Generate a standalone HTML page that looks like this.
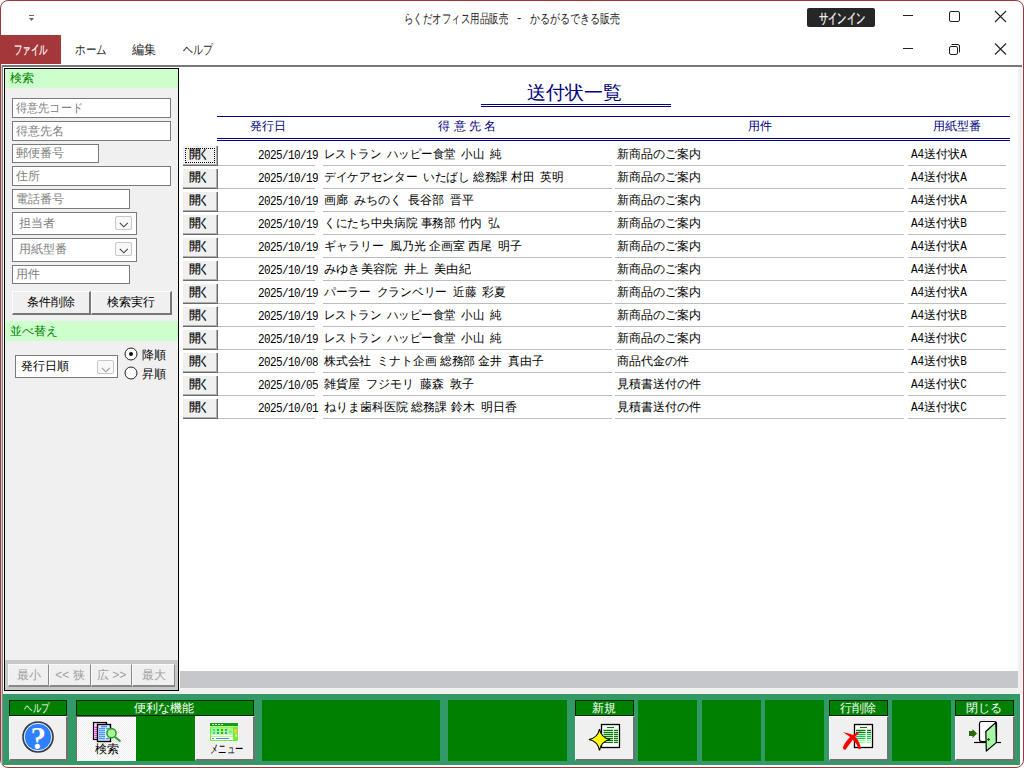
<!DOCTYPE html>
<html><head><meta charset="utf-8"><title>送付状一覧</title>
<style>
*{margin:0;padding:0;box-sizing:border-box}
html,body{width:1024px;height:768px;overflow:hidden;background:#fff}
body{position:relative;font-family:"Liberation Sans",sans-serif;font-size:12px;color:#000}
div{position:absolute;white-space:nowrap}
.s{display:inline-block;transform-origin:0 50%}
.win{left:0;top:0;width:1024px;height:768px;border:1px solid #a4373a;border-radius:8px;background:#fff}
.title{left:404px;top:10px;width:220px;font-size:13px;color:#222;white-space:nowrap}
.qat{left:29px;top:14px;width:6px;height:7px}
.signin{left:807px;top:8px;width:68px;height:19px;background:#262626;border-radius:2px;color:#fff;font-size:14px;text-align:center;line-height:21px;padding-right:1px;-webkit-text-stroke:0.3px #fff}
.tab{left:1px;top:35px;width:60px;height:29px;background:#a4373a;color:#fff;font-size:13px;line-height:29px;padding-left:13px;-webkit-text-stroke:0.2px #fff}
.menu{top:35px;height:29px;line-height:29px;font-size:13px;color:#262626}
/* form frame */
.frame{left:1px;top:64px;width:1022px;height:703px;background:#fff}
.ftop{left:1px;top:65px;width:1021px;height:2px;background:#777}
.fleft{left:1px;top:65px;width:2px;height:700px;background:#888;border-left:1px solid #c8c8c8}
.fright{left:1018px;top:67px;width:4px;height:627px;background:#f0f0f0}
/* left panel */
.lp{left:4px;top:68px;width:175px;height:623px;border:1px solid #000;background:#f0f0f0}
.gh{left:5px;width:173px;height:19px;background:#ccffcc;color:#008000;font-size:12px;padding-left:5px;line-height:19px}
.tb{left:12px;height:19px;border:1px solid #7a7a7a;background:#fff;color:#808080;font-size:12px;line-height:17px;padding-left:3px;white-space:nowrap}
.cb{left:12px;height:23px;border:1px solid #7a7a7a;background:#fff;color:#808080;font-size:12px;line-height:21px;padding-left:6px;white-space:nowrap}
.dd{width:17px;height:14px;border:1px solid #c8c8c8;border-radius:2px;background:#f8f8f8}
.pbtn{top:291px;height:24px;background:#f0f0f0;border-right:2px solid #777;border-bottom:2px solid #777;border-left:1px solid #fff;border-top:1px solid #fff;text-align:center;line-height:21px;font-size:12px;color:#000}
.lfoot{left:5px;top:660px;width:173px;height:30px;background:#c8c8c8}
.nbtn{top:664px;height:23px;background:#f0f0f0;border-right:1px solid #888;border-bottom:2px solid #888;border-top:1px solid #fafafa;border-left:1px solid #fafafa;color:#a0a0a0;text-align:center;line-height:20px;font-size:12px}
/* main */
.hscroll{left:180px;top:671px;width:838px;height:17px;background:#c6c7cb}
.below{left:3px;top:688px;width:1019px;height:6px;background:#f0f0f0}
.navy{background:#000080}
.ttl{left:527px;top:80px;font-size:18.6px;color:#000080;white-space:nowrap}
.hd{top:118px;color:#000080;font-size:12px;white-space:nowrap;text-align:center}
.btn.open{left:183px;width:35px;height:20px;background:#f0f0f0;border-right:1px solid #6a6a6a;border-bottom:1px solid #6a6a6a;box-shadow:inset -1px -1px 0 #b0b0b0;font-size:12px;line-height:17px;padding-left:6px;-webkit-text-stroke:0.2px #000}
.fr{left:2px;top:2px;width:30px;height:15px;border:1px dotted #000}
.cell{height:20px;border-bottom:1px solid #bdbdbd;font-size:12px;line-height:17px;white-space:nowrap;color:#000}
.date{left:218px;width:97px;font-family:"Liberation Mono",monospace;font-size:11px;letter-spacing:-0.6px}
.date .s{position:absolute;right:-3px;top:1.5px;transform:scaleY(1.18);transform-origin:100% 60%}
.date{overflow:visible}
.name{left:323px;width:289px;padding-left:1px}
.yo{left:615px;width:289px;padding-left:2px}
.kata{left:908px;width:98px;padding-left:3px}
/* bottom bar */
.gbar{left:3px;top:694px;width:1017px;height:71px;background:#339966}
.dp{top:700px;height:61px;background:#008000}
.bh{top:700px;height:16px;background:#008000;border:1px solid #002800;color:#fff;font-size:12px;text-align:center;line-height:14px;padding-right:2px}
.bb{top:716px;height:45px;background:#f0f0f0;border-right:2px solid #707070;border-bottom:2px solid #707070;border-top:1px solid #fff;border-left:1px solid #fff}
.bb.press{border-top:1px solid #707070;border-left:1px solid #707070;border-right:none;border-bottom:none;background:repeating-conic-gradient(#fff 0 25%,#ececec 0 50%) 0 0/2px 2px}
.cell,.tb,.cb,.pbtn,.btn,.gh,.hd,.bh{-webkit-text-stroke:0}
.cell.date{-webkit-text-stroke:0}
.m{font-family:"Liberation Mono",monospace;font-size:11px;display:inline-block;transform:scaleY(1.15)}

</style></head><body>
<div class="win"></div>
<!-- title bar -->
<svg style="position:absolute;left:28px;top:14px" width="8" height="9" viewBox="0 0 8 9"><rect x="1" y="1" width="5" height="1" fill="#666"/><path d="M1 4 L6 4 L3.5 7 Z" fill="#666"/></svg>
<div class="title" style="left:404px"><span class="s" style="transform:scaleX(0.727)">らくだオフィス用品販売</span></div>
<div class="title" style="left:517px">-</div>
<div class="title" style="left:530px"><span class="s" style="transform:scaleX(0.77)">かるがるできる販売</span></div>
<div class="signin"><span class="s" style="transform:scaleX(0.66);transform-origin:50% 50%">サインイン</span></div>
<svg style="position:absolute;left:890px;top:0" width="134" height="64" viewBox="0 0 134 64">
 <g stroke="#222" stroke-width="1" fill="none" shape-rendering="crispEdges">
  <line x1="13" y1="15.5" x2="23" y2="15.5"/>
  <rect x="59.5" y="11.5" width="10" height="10" rx="1.5" shape-rendering="auto"/>
  <line x1="13" y1="48.5" x2="23" y2="48.5"/>
  <rect x="59.5" y="46.5" width="8" height="8" rx="1.5" shape-rendering="auto"/>
  <path d="M61.5 44.5 H68 a1.5 1.5 0 0 1 1.5 1.5 V52.5" shape-rendering="auto"/>
 </g>
 <g stroke="#222" stroke-width="1.1" fill="none">
  <path d="M105 11 L116 22 M116 11 L105 22"/>
  <path d="M105 43.5 L116 54.5 M116 43.5 L105 54.5"/>
 </g>
</svg>
<!-- menu -->
<div class="tab"><span class="s" style="transform:scaleX(0.65)">ファイル</span></div>
<div class="menu" style="left:75px"><span class="s" style="transform:scaleX(0.81)">ホーム</span></div>
<div class="menu" style="left:132px"><span class="s" style="transform:scaleX(0.93)">編集</span></div>
<div class="menu" style="left:183px"><span class="s" style="transform:scaleX(0.77)">ヘルプ</span></div>
<!-- frame -->
<div class="ftop"></div>
<div class="fleft"></div>
<div class="fright"></div>
<div class="below"></div>
<!-- left panel -->
<div class="lp"></div>
<div class="gh" style="top:69px">検索</div>
<div class="tb" style="top:98px;width:159px;height:20px;line-height:18px"><span class="s" style="transform:scaleX(0.93)">得意先コード</span></div>
<div class="tb" style="top:121px;width:159px;height:20px;line-height:18px">得意先名</div>
<div class="tb" style="top:144px;width:87px">郵便番号</div>
<div class="tb" style="top:166px;width:159px;height:20px;line-height:18px">住所</div>
<div class="tb" style="top:189px;width:118px;height:20px;line-height:18px">電話番号</div>
<div class="cb" style="top:212px;width:125px">担当者<div class="dd" style="left:102px;top:3px"><svg style="position:absolute;left:3px;top:5px" width="10" height="6" viewBox="0 0 10 6"><path d="M0.8 0.8 L4.8 4.8 L8.8 0.8" stroke="#444" stroke-width="1.1" fill="none"/></svg></div></div>
<div class="cb" style="top:238px;width:125px;height:24px;line-height:20px">用紙型番<div class="dd" style="left:102px;top:3px"><svg style="position:absolute;left:3px;top:5px" width="10" height="6" viewBox="0 0 10 6"><path d="M0.8 0.8 L4.8 4.8 L8.8 0.8" stroke="#444" stroke-width="1.1" fill="none"/></svg></div></div>
<div class="tb" style="top:265px;width:118px">用件</div>
<div class="pbtn" style="left:12px;width:79px">条件削除</div>
<div class="pbtn" style="left:91px;width:81px">検索実行</div>
<div class="gh" style="top:321px;height:20px;line-height:20px">並べ替え</div>
<div class="cb" style="left:15px;top:355px;width:103px;color:#000;padding-left:5px">発行日順<div class="dd" style="left:81px;top:4px"><svg style="position:absolute;left:3px;top:6px" width="10" height="6" viewBox="0 0 10 6"><path d="M0.8 0.8 L4.8 4.8 L8.8 0.8" stroke="#999" stroke-width="1.1" fill="none"/></svg></div></div>
<svg style="position:absolute;left:124px;top:347px" width="14" height="33" viewBox="0 0 14 33">
 <circle cx="7" cy="7" r="6" fill="#fff" stroke="#222" stroke-width="1"/>
 <circle cx="7" cy="7" r="2" fill="#111"/>
 <circle cx="7" cy="26" r="6" fill="#fff" stroke="#222" stroke-width="1"/>
</svg>
<div style="left:142px;top:347px;font-size:12px">降順</div>
<div style="left:142px;top:366px;font-size:12px">昇順</div>
<div class="lfoot"></div>
<div class="nbtn" style="left:8px;width:41px">最小</div>
<div class="nbtn" style="left:49px;width:42px">&lt;&lt; 狭</div>
<div class="nbtn" style="left:91px;width:41px">広 &gt;&gt;</div>
<div class="nbtn" style="left:132px;width:43px">最大</div>
<!-- main -->
<div class="hscroll"></div>
<div class="ttl">送付状一覧</div>
<div class="navy" style="left:481px;top:104px;width:190px;height:1px"></div>
<div class="navy" style="left:481px;top:106px;width:190px;height:1px"></div>
<div class="navy" style="left:217px;top:116px;width:793px;height:1px"></div>
<div class="navy" style="left:217px;top:138px;width:793px;height:1px"></div>
<div class="navy" style="left:217px;top:140px;width:793px;height:1px"></div>
<div class="hd" style="left:219px;width:97px">発行日</div>
<div class="hd" style="left:323px;width:289px">得 意 先 名</div>
<div class="hd" style="left:615px;width:289px">用件</div>
<div class="hd" style="left:908px;width:98px">用紙型番</div>
<div class="btn open" style="top:146px"><div class="fr"></div><span style="letter-spacing:-3px">開</span>く</div>
<div class="cell date" style="top:146px"><span class="s">2025/10/19</span></div>
<div class="cell name" style="top:146px"><span class="s" style="transform:scaleX(0.954)">レストラン ハッピー食堂 小山 純</span></div>
<div class="cell yo" style="top:146px">新商品のご案内</div>
<div class="cell kata" style="top:146px"><span class="m">A4</span>送付状<span class="m">A</span></div>
<div class="btn open" style="top:169px"><span style="letter-spacing:-3px">開</span>く</div>
<div class="cell date" style="top:169px"><span class="s">2025/10/19</span></div>
<div class="cell name" style="top:169px"><span class="s" style="transform:scaleX(0.971)">デイケアセンター いたばし 総務課 村田 英明</span></div>
<div class="cell yo" style="top:169px">新商品のご案内</div>
<div class="cell kata" style="top:169px"><span class="m">A4</span>送付状<span class="m">A</span></div>
<div class="btn open" style="top:192px"><span style="letter-spacing:-3px">開</span>く</div>
<div class="cell date" style="top:192px"><span class="s">2025/10/19</span></div>
<div class="cell name" style="top:192px"><span class="s" style="transform:scaleX(1.0)">画廊 みちのく 長谷部 晋平</span></div>
<div class="cell yo" style="top:192px">新商品のご案内</div>
<div class="cell kata" style="top:192px"><span class="m">A4</span>送付状<span class="m">A</span></div>
<div class="btn open" style="top:215px"><span style="letter-spacing:-3px">開</span>く</div>
<div class="cell date" style="top:215px"><span class="s">2025/10/19</span></div>
<div class="cell name" style="top:215px"><span class="s" style="transform:scaleX(0.972)">くにたち中央病院 事務部 竹内 弘</span></div>
<div class="cell yo" style="top:215px">新商品のご案内</div>
<div class="cell kata" style="top:215px"><span class="m">A4</span>送付状<span class="m">B</span></div>
<div class="btn open" style="top:238px"><span style="letter-spacing:-3px">開</span>く</div>
<div class="cell date" style="top:238px"><span class="s">2025/10/19</span></div>
<div class="cell name" style="top:238px"><span class="s" style="transform:scaleX(0.995)">ギャラリー 風乃光 企画室 西尾 明子</span></div>
<div class="cell yo" style="top:238px">新商品のご案内</div>
<div class="cell kata" style="top:238px"><span class="m">A4</span>送付状<span class="m">A</span></div>
<div class="btn open" style="top:261px"><span style="letter-spacing:-3px">開</span>く</div>
<div class="cell date" style="top:261px"><span class="s">2025/10/19</span></div>
<div class="cell name" style="top:261px"><span class="s" style="transform:scaleX(1.02)">みゆき美容院 井上 美由紀</span></div>
<div class="cell yo" style="top:261px">新商品のご案内</div>
<div class="cell kata" style="top:261px"><span class="m">A4</span>送付状<span class="m">A</span></div>
<div class="btn open" style="top:284px"><span style="letter-spacing:-3px">開</span>く</div>
<div class="cell date" style="top:284px"><span class="s">2025/10/19</span></div>
<div class="cell name" style="top:284px"><span class="s" style="transform:scaleX(0.976)">パーラー クランベリー 近藤 彩夏</span></div>
<div class="cell yo" style="top:284px">新商品のご案内</div>
<div class="cell kata" style="top:284px"><span class="m">A4</span>送付状<span class="m">A</span></div>
<div class="btn open" style="top:307px"><span style="letter-spacing:-3px">開</span>く</div>
<div class="cell date" style="top:307px"><span class="s">2025/10/19</span></div>
<div class="cell name" style="top:307px"><span class="s" style="transform:scaleX(0.954)">レストラン ハッピー食堂 小山 純</span></div>
<div class="cell yo" style="top:307px">新商品のご案内</div>
<div class="cell kata" style="top:307px"><span class="m">A4</span>送付状<span class="m">B</span></div>
<div class="btn open" style="top:330px"><span style="letter-spacing:-3px">開</span>く</div>
<div class="cell date" style="top:330px"><span class="s">2025/10/19</span></div>
<div class="cell name" style="top:330px"><span class="s" style="transform:scaleX(0.954)">レストラン ハッピー食堂 小山 純</span></div>
<div class="cell yo" style="top:330px">新商品のご案内</div>
<div class="cell kata" style="top:330px"><span class="m">A4</span>送付状<span class="m">C</span></div>
<div class="btn open" style="top:353px"><span style="letter-spacing:-3px">開</span>く</div>
<div class="cell date" style="top:353px"><span class="s">2025/10/08</span></div>
<div class="cell name" style="top:353px"><span class="s" style="transform:scaleX(0.986)">株式会社 ミナト企画 総務部 金井 真由子</span></div>
<div class="cell yo" style="top:353px">商品代金の件</div>
<div class="cell kata" style="top:353px"><span class="m">A4</span>送付状<span class="m">B</span></div>
<div class="btn open" style="top:376px"><span style="letter-spacing:-3px">開</span>く</div>
<div class="cell date" style="top:376px"><span class="s">2025/10/05</span></div>
<div class="cell name" style="top:376px"><span class="s" style="transform:scaleX(1.0)">雑貨屋 フジモリ 藤森 敦子</span></div>
<div class="cell yo" style="top:376px">見積書送付の件</div>
<div class="cell kata" style="top:376px"><span class="m">A4</span>送付状<span class="m">C</span></div>
<div class="btn open" style="top:399px"><span style="letter-spacing:-3px">開</span>く</div>
<div class="cell date" style="top:399px"><span class="s">2025/10/01</span></div>
<div class="cell name" style="top:399px"><span class="s" style="transform:scaleX(1.0)">ねりま歯科医院 総務課 鈴木 明日香</span></div>
<div class="cell yo" style="top:399px">見積書送付の件</div>
<div class="cell kata" style="top:399px"><span class="m">A4</span>送付状<span class="m">C</span></div>
<!-- bottom bar -->
<div class="gbar"></div>
<div class="bh" style="left:9px;width:58px"><span class="s" style="transform:scaleX(0.7);transform-origin:50% 50%">ヘルプ</span></div>
<div class="bb" style="left:9px;width:59px"></div>
<div class="bh" style="left:76px;width:178px">便利な機能</div>
<div class="dp" style="left:136px;top:716px;width:59px;height:45px"></div>
<div class="bb press" style="left:76px;width:60px"></div>
<div class="bb" style="left:195px;width:60px"></div>
<div class="dp" style="left:262px;width:178px"></div>
<div class="dp" style="left:448px;width:119px"></div>
<div class="bh" style="left:575px;width:59px">新規</div>
<div class="bb" style="left:575px;width:60px"></div>
<div class="dp" style="left:638px;width:59px"></div>
<div class="dp" style="left:702px;width:59px"></div>
<div class="dp" style="left:765px;width:59px"></div>
<div class="bh" style="left:829px;width:59px">行削除</div>
<div class="bb" style="left:829px;width:60px"></div>
<div class="dp" style="left:892px;width:59px"></div>
<div class="bh" style="left:955px;width:59px">閉じる</div>
<div class="bb" style="left:955px;width:60px"></div>
<svg style="position:absolute;left:0;top:0" width="1024" height="768" viewBox="0 0 1024 768">
 <!-- help -->
 <circle cx="38" cy="737" r="15" fill="#2f80ff" stroke="#3a3a3a" stroke-width="1.6"/>
 <circle cx="38" cy="737" r="13.7" fill="none" stroke="#fff" stroke-width="0.9"/>
 <text x="38.2" y="748.5" font-family="Liberation Serif" font-weight="bold" font-size="31" fill="#fff" text-anchor="middle">?</text>
 <!-- search -->
 <rect x="93.5" y="722.5" width="13" height="17" fill="#ffd0ff" stroke="#000" stroke-width="1.2"/>
 <g stroke="#ff20ff" stroke-width="1">
  <path d="M94.5 727.5h2.5M94.5 729.5h2.5M94.5 731.5h2.5M94.5 733.5h2.5M94.5 735.5h2.5M94.5 737.5h2.5"/>
 </g>
 <rect x="97.5" y="724.5" width="13" height="17" fill="#dce8ff" stroke="#000" stroke-width="1.4"/>
 <g stroke="#1a7fff" stroke-width="1.1">
  <path d="M101 726.7h6M99 728.7h6M99 730.7h6M99 732.7h6M99 734.7h6M99 736.7h6M99 738.7h6M106 728.7h3M106 738.7h3"/>
 </g>
 <line x1="115" y1="737" x2="120.5" y2="741.5" stroke="#30a030" stroke-width="2.2"/>
 <circle cx="111.5" cy="733.2" r="4.6" fill="#a8f8a0" stroke="#28a028" stroke-width="1.6"/>
 <!-- menu -->
 <rect x="209.5" y="722.5" width="29" height="19" fill="#fff"/>
 <rect x="210" y="723" width="28" height="3" fill="#10a010"/>
 <path d="M212 724.5h2M215 724.5h2M218 724.5h2M221 724.5h2" stroke="#d0ffd0" stroke-width="1"/>
 <rect x="210" y="726.5" width="28" height="14.5" fill="#70f030"/>
 <rect x="211" y="727.5" width="22" height="7" fill="#a8ff70"/>
 <rect x="213" y="729" width="2" height="2" fill="#20d0ff"/><rect x="217" y="729" width="2" height="2" fill="#10b0b0"/><rect x="221" y="729" width="2" height="2" fill="#40a020"/><rect x="225" y="729" width="2" height="2" fill="#4a88ff"/>
 <rect x="213" y="732" width="2" height="2" fill="#20d0ff"/><rect x="217" y="732" width="2" height="2" fill="#10b0b0"/><rect x="221" y="732" width="2" height="2" fill="#40a020"/><rect x="225" y="732" width="2" height="2" fill="#4a88ff"/>
 <rect x="229" y="731" width="2.5" height="2" fill="#40f0ff"/>
 <rect x="234" y="729" width="3" height="4" fill="#ffc840"/>
 <rect x="211" y="734.5" width="22" height="2" fill="#fff"/>
 <rect x="235" y="734.5" width="2" height="2" fill="#fff"/>
 <rect x="211" y="737" width="22" height="3" fill="#fff"/>
 <path d="M212 738.5h2M216 738.5h13" stroke="#4a88ff" stroke-width="1"/>
 <!-- new -->
 <rect x="601.5" y="724.5" width="18" height="23" fill="#fff" stroke="#000" stroke-width="1.3"/>
 <g stroke="#008000" stroke-width="1.2">
  <path d="M607 727.5h7M603.5 730.3h9.5M614 730.3h4M603.5 732.3h9.5M614 732.3h4M603.5 734.3h9.5M614 734.3h4M603.5 736.3h9.5M614 736.3h4M603.5 738.3h9.5M614 738.3h4M603.5 740.3h9.5M614 740.3h4M603.5 742.3h9.5M614 742.3h4"/>
 </g>
 <path d="M599.5 729 Q601 737.6 610 739.5 Q601 741.4 599.5 750.5 Q598 741.4 589 739.5 Q598 737.6 599.5 729 Z" fill="#ffff00" stroke="#000" stroke-width="1.2" stroke-linejoin="miter"/>
 <!-- delete row -->
 <rect x="854.5" y="724.5" width="18" height="23" fill="#fff" stroke="#000" stroke-width="1.3"/>
 <g stroke-width="1.2">
  <path d="M860 727.5h7M856 730.3h9.5M867 730.3h4M856 732.3h9.5M867 732.3h4" stroke="#008000"/>
  <path d="M856 734.3h9.5M867 734.3h4M856 736.3h9.5M867 736.3h4M856 738.3h9.5M867 738.3h4" stroke="#10c050"/>
  <path d="M856 740.3h9.5M867 740.3h4M856 742.3h9.5M867 742.3h4" stroke="#90ff90"/>
 </g>
 <path d="M843 732.3 Q851.5 733.2 856 737.5 Q859.5 741.5 861 748.5 L858.8 749.2 Q856.5 743 852.5 739.2 Q848.5 735.5 843 732.3 Z" fill="#ff0000"/>
 <path d="M860.6 731.3 Q853 733.5 848.5 738.5 Q844.5 743 842.8 747.5 Q843 750 845.5 749.8 Q848.5 745.5 851.5 741.5 Q855.5 736 860.6 731.3 Z" fill="#ff0000"/>
 <!-- close -->
 <rect x="979.5" y="721.5" width="17" height="20" rx="2" fill="#fff" stroke="#000" stroke-width="1.2"/>
 <line x1="974" y1="742.5" x2="1001" y2="742.5" stroke="#000" stroke-width="1.2"/>
 <path d="M985.8 731.5 L995.8 722.5 L996.3 742.6 L986.3 751 Z" fill="#a8f8a8" stroke="#000" stroke-width="1.2" stroke-linejoin="round"/>
 <path d="M988.5 738v3M987 739.5h3" stroke="#206000" stroke-width="1.2"/>
 <path d="M969 731h3.5v-2l4.5 4.5l-4.5 4.5v-2h-3.5z" fill="#2a6800"/>
 <!-- texts under icons -->
</svg>
<div style="left:95px;top:742px;font-size:12px;line-height:14px">検索</div>
<div style="left:210px;top:742px;font-size:12px;line-height:14px"><span class="s" style="transform:scaleX(0.7)">メニュー</span></div>

</body></html>
